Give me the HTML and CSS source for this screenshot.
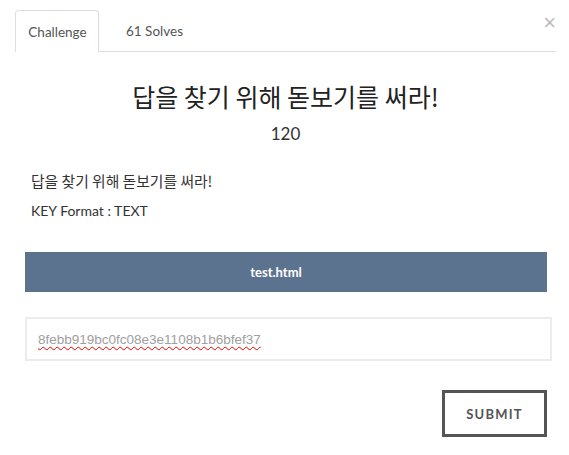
FILE: index.html
```html
<!DOCTYPE html>
<html>
<head>
<meta charset="utf-8">
<link rel="stylesheet" href="styles.css">
</head>
<body>
<div class="modal">
  <div class="tabs">
    <div class="tab active">Challenge</div>
    <div class="tab">61 Solves</div>
    <div class="close">&times;</div>
  </div>
  <div class="body">
    <h2 class="title">답을 찾기 위해 돋보기를 써라!</h2>
    <div class="points">120</div>
    <div class="desc">
      <p>답을 찾기 위해 돋보기를 써라!</p>
      <p class="lat">KEY Format : TEXT</p>
    </div>
    <div class="file">test.html</div>
    <div class="input"><span class="val">8febb919bc0fc08e3e1108b1b6bfef37</span></div>
    <div class="actions"><div class="submit">SUBMIT</div></div>
  </div>
</div>
</body>
</html>
```
FILE: styles.css
```css
html, body { margin: 0; padding: 0; background: #fff; }
body { font-family: Lato, "Noto Sans CJK KR", sans-serif; color: #333; width: 569px; height: 455px; overflow: hidden; }
.modal { padding: 10px 13px 0 15px; }
.tabs { display: flex; align-items: stretch; height: 41px; border-bottom: 1px solid #ddd; position: relative; }
.tab { font-size: 13.5px; color: #555; padding: 0 14px; display: flex; align-items: center; box-sizing: border-box; margin-right: 13px; }
.tab.active { border: 1px solid #ddd; border-bottom: none; border-radius: 4px 4px 0 0; background: #fff; margin-bottom: -1px; height: 42px; width: 84px; padding: 0 0 0 1px; justify-content: center; }
.close { position: absolute; right: 0; top: 2px; font-size: 22px; color: #bbb; line-height: 22px; font-family: "Liberation Sans", sans-serif; }
.body { padding: 0; }
.title { font-family: "Noto Sans CJK KR", sans-serif; font-weight: 400; font-size: 25px; text-align: center; margin: 27px 0 0; line-height: 34px; color: #222; }
.points { text-align: center; font-size: 17px; line-height: 22px; margin-top: 10px; color: #333; }
.desc { margin-top: 21px; padding-left: 16px; font-size: 14px; }
.desc p { margin: 0; line-height: 30px; height: 30px; font-family: "Noto Sans CJK KR", sans-serif; font-size: 14.8px; }
.desc p.lat { font-family: Lato, sans-serif; font-size: 14px; }
.file { margin: 26px 0 0 10px; width: 522px; height: 40px; background: #5c7390; color: #fff; font-weight: 700; font-size: 13px; display: flex; align-items: center; justify-content: center; padding-right: 20px; box-sizing: border-box; }
.input { margin: 25px 0 0 10px; width: 527px; height: 44px; border: 2px solid #ececec; box-sizing: border-box; display: flex; align-items: center; padding-left: 11px; }
.val { font-family: "Liberation Sans", sans-serif; font-size: 13.5px; color: #a0a0a0; text-decoration: underline wavy #e00; text-decoration-thickness: 1px; text-underline-offset: 2px; }
.actions { display: flex; justify-content: flex-end; width: 522px; margin: 29px 0 0 10px; }
.submit { width: 105px; height: 47px; border: 3px solid #555; box-sizing: border-box; display: flex; align-items: center; justify-content: center; font-weight: 700; font-size: 13px; letter-spacing: 1.2px; color: #555; }
```
